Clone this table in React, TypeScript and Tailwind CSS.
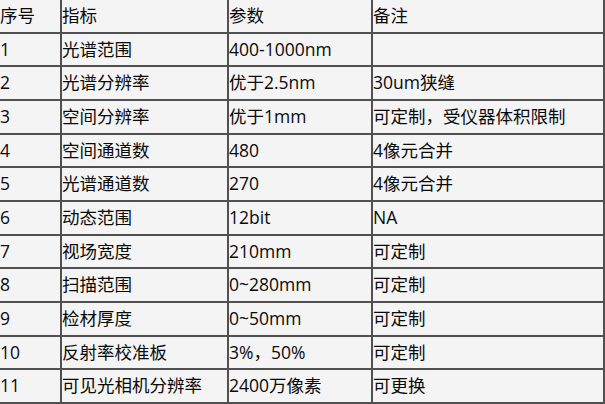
import React from "react";

const rows: string[][] = [
  ["序号", "指标", "参数", "备注"],
  ["1", "光谱范围", "400-1000nm", ""],
  ["2", "光谱分辨率", "优于2.5nm", "30um狭缝"],
  ["3", "空间分辨率", "优于1mm", "可定制，受仪器体积限制"],
  ["4", "空间通道数", "480", "4像元合并"],
  ["5", "光谱通道数", "270", "4像元合并"],
  ["6", "动态范围", "12bit", "NA"],
  ["7", "视场宽度", "210mm", "可定制"],
  ["8", "扫描范围", "0~280mm", "可定制"],
  ["9", "检材厚度", "0~50mm", "可定制"],
  ["10", "反射率校准板", "3%，50%", "可定制"],
  ["11", "可见光相机分辨率", "2400万像素", "可更换"],
];

export default function App() {
  return (
    <div className="w-[605px] h-[404px] overflow-hidden bg-[#f4f4f4]">
      <div
        className="-mt-[2px] -ml-[2px] w-[607px] border-l-2 border-t-2 border-[#505050] grid grid-cols-[62px_167px_144px_232px] text-[17.5px] text-[#0a0a0a] leading-none"
        style={{ fontFamily: '"Open Sans", "Noto Sans CJK SC", sans-serif' }}
      >
        {rows.map((r, i) =>
          r.map((c, j) => (
            <div
              key={`${i}-${j}`}
              className="h-[33.67px] border-r-2 border-b-2 border-[#505050] flex items-center whitespace-nowrap overflow-hidden"
            >
              {c}
            </div>
          ))
        )}
      </div>
    </div>
  );
}
